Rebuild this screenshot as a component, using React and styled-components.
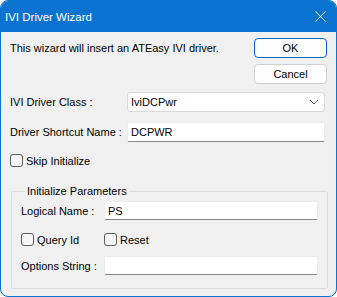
import React from "react"
import styled, { createGlobalStyle } from "styled-components"

const GlobalStyle = createGlobalStyle`
  html, body {
    margin: 0;
    padding: 0;
    background: #ffffff;
  }
  body {
    font-family: "Liberation Sans", Arial, sans-serif;
    font-size: 11px;
    color: #000;
  }
`

const Window = styled.div`
  box-sizing: border-box;
  width: 337px;
  height: 297px;
  border: 1px solid #0a72cf;
  border-radius: 8px;
  overflow: hidden;
  background: #f0f0f0;
  display: flex;
  flex-direction: column;
`

const TitleBar = styled.div`
  height: 31px;
  flex: none;
  background: #0a72cf;
  color: #fff;
  display: flex;
  align-items: center;
  justify-content: space-between;
  padding: 0 10px 0 4px;
`

const TitleText = styled.span`
  font-size: 11.5px;
`

const Body = styled.div`
  padding: 6px 9px 0 9px;
  display: flex;
  flex-direction: column;
`

const TopRow = styled.div`
  display: flex;
  justify-content: space-between;
  align-items: flex-start;
`

const Message = styled.p`
  margin: 0;
  line-height: 20px;
`

const ButtonColumn = styled.div`
  display: flex;
  flex-direction: column;
  gap: 6px;
`

const Button = styled.button`
  box-sizing: border-box;
  width: 73px;
  height: 20px;
  font: inherit;
  background: #fdfdfd;
  border: 1px solid ${p => (p.$default ? "#0067c0" : "#d0d0d0")};
  border-radius: 4px;
  padding: 0;
  color: #000;
`

const FormGrid = styled.div`
  display: grid;
  grid-template-columns: 117px 198px;
  row-gap: 10px;
  align-items: center;
  margin-top: 8px;
`

const Label = styled.span`
  white-space: nowrap;
`

const Combo = styled.div`
  box-sizing: border-box;
  height: 20px;
  background: #fff;
  border: 1px solid #d9d9d9;
  border-radius: 3px;
  display: flex;
  align-items: center;
  justify-content: space-between;
  padding: 0 5px 0 3px;
`

const TextField = styled.div`
  box-sizing: border-box;
  height: ${p => p.$h || 20}px;
  background: #fff;
  border: 1px solid #ececec;
  border-bottom-color: #868686;
  border-radius: 2px;
  display: flex;
  align-items: center;
  padding: 0 3px;
`

const CheckRow = styled.div`
  display: flex;
  align-items: center;
  margin-top: ${p => p.$top || 0}px;
`

const CheckItem = styled.label`
  display: flex;
  align-items: center;
  gap: 3px;
  width: ${p => (p.$w ? `${p.$w}px` : "auto")};
`

const Box = styled.span`
  box-sizing: border-box;
  width: 13px;
  height: 13px;
  border: 1px solid #5c5c5c;
  border-radius: 3px;
  background: #f6f6f6;
`

const Group = styled.fieldset`
  box-sizing: border-box;
  margin: 18px 0 0 1px;
  width: 317px;
  height: 104px;
  border: 1px solid #dcdcdc;
  border-radius: 2px;
  padding: 4px 9px 0 9px;
  display: flex;
  flex-direction: column;
`

const Legend = styled.legend`
  padding: 0 2px;
  margin-left: 4px;
`

const GroupGrid = styled.div`
  display: grid;
  grid-template-columns: 83px 214px;
  align-items: center;
  margin-top: ${p => p.$top || 0}px;
`

const Chevron = () => (
  <svg width="10" height="6" viewBox="0 0 10 6">
    <path d="M1 1 L5 5 L9 1" fill="none" stroke="#6b6b6b" strokeWidth="1" />
  </svg>
)

const CloseIcon = () => (
  <svg width="11" height="11" viewBox="0 0 11 11">
    <path d="M0.5 0.5 L10.5 10.5 M10.5 0.5 L0.5 10.5" stroke="#fff" strokeWidth="1" />
  </svg>
)

const App = () => {
  return (
    <>
      <GlobalStyle />
      <Window>
        <TitleBar>
          <TitleText>IVI Driver Wizard</TitleText>
          <CloseIcon />
        </TitleBar>
        <Body>
          <TopRow>
            <Message>This wizard will insert an ATEasy IVI driver.</Message>
            <ButtonColumn>
              <Button $default>OK</Button>
              <Button>Cancel</Button>
            </ButtonColumn>
          </TopRow>
          <FormGrid>
            <Label>IVI Driver Class :</Label>
            <Combo>
              <span>IviDCPwr</span>
              <Chevron />
            </Combo>
            <Label>Driver Shortcut Name :</Label>
            <TextField>DCPWR</TextField>
          </FormGrid>
          <CheckRow $top={12}>
            <CheckItem>
              <Box />
              Skip Initialize
            </CheckItem>
          </CheckRow>
          <Group>
            <Legend>Initialize Parameters</Legend>
            <GroupGrid>
              <Label>Logical Name :</Label>
              <TextField $h={19}>PS</TextField>
            </GroupGrid>
            <CheckRow $top={13}>
              <CheckItem $w={83}>
                <Box />
                Query Id
              </CheckItem>
              <CheckItem>
                <Box />
                Reset
              </CheckItem>
            </CheckRow>
            <GroupGrid $top={10}>
              <Label>Options String :</Label>
              <TextField $h={19} />
            </GroupGrid>
          </Group>
        </Body>
      </Window>
    </>
  )
}

export default App
